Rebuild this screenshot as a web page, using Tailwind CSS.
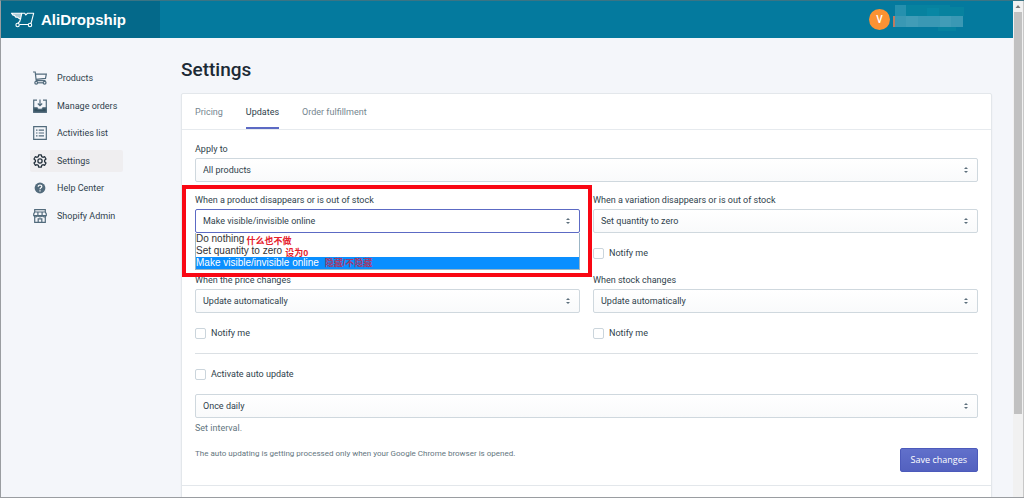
<!DOCTYPE html>
<html lang="en">
<head>
<meta charset="utf-8">
<meta name="viewport" content="width=device-width, initial-scale=1">
<title>AliDropship – Settings</title>
<script src="https://cdn.jsdelivr.net/npm/@tailwindcss/browser@4"></script>
</head>
<body class="h-screen overflow-hidden bg-[#f4f6fa] font-[Roboto,'Noto_Sans_CJK_SC',sans-serif] text-[9px] leading-3 text-[#2f3f4c]">
<svg class="hidden" aria-hidden="true">
  <symbol id="updown" viewBox="0 0 6 8"><path d="M3 1 5 3H1zM3 7 1 5h4z" fill="#5c6f7c"/></symbol>
</svg>
<div class="flex h-full border-y border-l border-[#9a9da1] border-t-[#3b7484]">
  <div class="flex min-w-0 flex-1 flex-col">
    <header class="flex h-[37px] shrink-0 bg-[#047a9e] text-white">
      <a href="#" class="flex w-[159px] items-center gap-[6px] bg-[#04698a] pl-[10px] text-[15px] leading-5 font-bold font-['Liberation_Sans',sans-serif]">
        <svg class="h-4 w-6" viewBox="0 0 24 16" fill="none" stroke="#fff" stroke-width="1.1" stroke-linejoin="round" stroke-linecap="round" aria-hidden="true">
          <path d="M.5 1.2h10.3L9.6 6.6H8.200L6.500 5.200H4.800L3.200 3.200H2z" fill="#fff" fill-opacity=".65"/>
          <path d="M10.800 1.200h3L14.700 3l2-1.800h6l-2.300 9-.8 1.200M9.600 6.600 8.700 9.500l-1.500 1.300M9 12.500h7.800"/>
          <circle cx="6.600" cy="13" r="1.700"/><circle cx="19" cy="13" r="1.700"/>
        </svg>
        AliDropship
      </a>
      <div class="flex flex-1 items-center justify-end gap-[3px] pr-[49px]">
        <span class="flex size-[21px] items-center justify-center rounded-full bg-[#fb9233] text-[10px] font-medium">V</span>
        <svg class="h-[30px] w-[71px]" viewBox="0 0 71 30" role="img" aria-label="Account">
          <path d="M0 11h2v11H0z" fill="#bd7b61"/>
          <path d="M13 0h44v11H13zM57 2h14v9H57zM45 22h18v4H45z" fill="#07829f"/>
          <path d="M2 0h11v11H2z" fill="#2590ae"/>
          <path d="M2 11h68v11H2z" fill="#3a98b4"/>
          <path d="M13 11h12v11H13zM47 11h11v11H47z" fill="#419cb7"/>
          <path d="M34 3h12v8H34z" fill="#0887a4"/>
        </svg>
      </div>
    </header>

    <div class="flex min-h-0 flex-1 overflow-hidden pr-[21px]">
      <nav class="mt-[29px] flex h-40 w-[180px] shrink-0 flex-col justify-between pr-[58px] pl-[29px]">
        <a href="#" class="flex h-[22px] items-center gap-[10px] pl-[3px]">
          <svg class="size-[14px]" viewBox="0 0 14 14" fill="none" stroke="#526b7c" stroke-width="1.2" aria-hidden="true"><path d="M0 1h2.200l1 8.600h9.300M2.500 3.200h10.800l-.8 4.200-9.500.9"/><circle cx="3.200" cy="11.800" r="1.400"/><circle cx="11.600" cy="11.800" r="1.400"/><path d="M4.600 11.800h5.600"/></svg>
          Products</a>
        <a href="#" class="flex h-[22px] items-center gap-[10px] pl-[3px]">
          <svg class="size-[14px]" viewBox="0 0 14 14" fill="none" stroke="#526b7c" stroke-width="1.2" aria-hidden="true"><path d="M4 1.200H.7v12h12.600v-12H10M7 .5v6M4.800 4.500 7 6.700l2.200-2.200"/><path d="M.7 8.800h3.400l1 1.600h3.800l1-1.600h3.400v4.400H.7z" fill="#34505f"/></svg>
          Manage orders</a>
        <a href="#" class="flex h-[22px] items-center gap-[10px] pl-[3px]">
          <svg class="size-[14px]" viewBox="0 0 14 14" fill="none" stroke="#526b7c" stroke-width="1.2" aria-hidden="true"><path d="M.7.7h12.600v12.600H.7zM3 4.200h1.500M5.700 4.200H11M3 7h1.500M5.700 7H11M3 9.800h1.500M5.700 9.800H11"/></svg>
          Activities list</a>
        <a href="#" aria-current="page" class="flex h-[22px] items-center gap-[10px] rounded-xs bg-[#efeef0] pl-[3px]">
          <svg class="size-[14px]" viewBox="0 0 14 14" fill="none" stroke="#25323d" stroke-width="1.3" stroke-linejoin="round" aria-hidden="true"><path d="M5.700.8h2.600l.4 1.800 1.200.7 1.800-.6L13 5l-1.400 1.300v1.400L13 9l-1.300 2.300-1.800-.6-1.200.7-.4 1.800H5.700l-.4-1.800-1.200-.7-1.800.6L1 9l1.400-1.300V6.300L1 5l1.300-2.300 1.800.6 1.200-.7z"/><circle cx="7" cy="7" r="2.100"/></svg>
          Settings</a>
        <a href="#" class="flex h-[22px] items-center gap-[10px] pl-[3px]">
          <svg class="size-[14px]" viewBox="0 0 14 14" fill="none" aria-hidden="true"><circle cx="7" cy="7" r="5.400" fill="#526b7c"/><path d="M5.200 5.700c0-2.300 3.700-2.200 3.600 0C8.700 6.900 7 6.800 7 8.200M7 9.200v1.300" stroke="#fff" stroke-width="1.200"/></svg>
          Help Center</a>
        <a href="#" class="flex h-[22px] items-center gap-[10px] pl-[3px]">
          <svg class="size-[14px]" viewBox="0 0 14 14" fill="none" stroke="#526b7c" stroke-width="1.200" aria-hidden="true"><path d="M1.700.7h10.600v2.300H1.700zM1.700 3 .7 5v1.500h12.600V5l-1-2M4.900 3v3.500M9.100 3v3.500M1.700 6.500v6.800h10.600V6.500M.7 6.500c.8 1.800 3.400 1.800 4.200 0 .8 1.800 3.400 1.800 4.200 0 .8 1.800 3.400 1.800 4.200 0M5.200 13.300V9.800h3.600v3.500"/></svg>
          Shopify Admin</a>
      </nav>

      <main class="min-w-0 flex-1 pt-5">
        <h1 class="text-[19px] leading-6 font-medium text-[#1c2a35]">Settings</h1>
        <section class="mt-[11px] rounded-xs border border-[#e3e7eb] bg-white shadow-xs">
          <div class="flex gap-[23px] border-b border-[#e6eaee] px-[13px] text-[#75868f]" role="tablist">
            <button type="button" role="tab" class="h-[35px]">Pricing</button>
            <button type="button" role="tab" aria-selected="true" class="h-[35px] border-b-2 border-[#5c6ac4] pt-[2px] text-[#2f3f4c]">Updates</button>
            <button type="button" role="tab" class="h-[35px]">Order fulfillment</button>
          </div>

          <form class="p-[13px]">
            <label for="apply" class="block">Apply to</label>
            <div class="relative mt-[3px]">
              <select id="apply" class="block h-6 w-full appearance-none rounded-xs border border-[#cfd8de] bg-linear-to-b from-white to-[#f9fafb] px-[7px]"><option>All products</option></select>
              <svg class="pointer-events-none absolute top-2 right-[9px] h-2 w-[6px]"><use href="#updown"/></svg>
            </div>

            <div class="mt-3 grid grid-cols-2 gap-x-[13px]">
              <div>
                <label for="product" class="block">When a product disappears or is out of stock</label>
                <div class="relative mt-[3px]">
                  <select id="product" class="block h-6 w-full appearance-none rounded-xs border border-[#5c6ac4] bg-white px-[7px]"><option>Make visible/invisible online</option></select>
                  <svg class="pointer-events-none absolute top-2 right-[9px] h-2 w-[6px]"><use href="#updown"/></svg>
                  <ul class="absolute top-6 right-0 left-0 z-10 border border-t-0 border-[#9bb5c5] bg-white font-['Liberation_Sans','Noto_Sans_CJK_SC',sans-serif] text-[10px] text-[#333]" role="listbox" aria-label="When a product disappears or is out of stock">
                    <li role="option" class="flex h-3 gap-[2px]">Do nothing <span class="pt-[2px] text-[9px] leading-3 font-bold text-[#e5202b]">什么也不做</span></li>
                    <li role="option" class="flex h-3 gap-[3px]">Set quantity to zero <span class="pt-[2px] text-[9px] leading-3 font-bold text-[#e5202b]">设为0</span></li>
                    <li role="option" aria-selected="true" class="flex h-3 gap-[6px] bg-[#0a8fff] text-white">Make visible/invisible online <span class="text-[9px] leading-3 font-bold text-[#a33a6c]">隐藏/不隐藏</span></li>
                  </ul>
                  <div class="pointer-events-none absolute -top-6 -right-3 -bottom-11 -left-[13px] z-20 border-4 border-[#f90713]"></div>
                </div>
              </div>
              <div>
                <label for="variation" class="block">When a variation disappears or is out of stock</label>
                <div class="relative mt-[3px]">
                  <select id="variation" class="block h-6 w-full appearance-none rounded-xs border border-[#cfd8de] bg-linear-to-b from-white to-[#f9fafb] px-[7px]"><option>Set quantity to zero</option></select>
                  <svg class="pointer-events-none absolute top-2 right-[9px] h-2 w-[6px]"><use href="#updown"/></svg>
                </div>
                <label class="mt-[14px] flex items-center gap-[5px]"><input type="checkbox" class="size-[11px] appearance-none rounded-xs border border-[#cbd5dc] bg-white">Notify me</label>
              </div>
              <div class="mt-[15px]">
                <label for="price" class="block">When the price changes</label>
                <div class="relative mt-[3px]">
                  <select id="price" class="block h-6 w-full appearance-none rounded-xs border border-[#cfd8de] bg-linear-to-b from-white to-[#f9fafb] px-[7px]"><option>Update automatically</option></select>
                  <svg class="pointer-events-none absolute top-2 right-[9px] h-2 w-[6px]"><use href="#updown"/></svg>
                </div>
                <label class="mt-[14px] flex items-center gap-[5px]"><input type="checkbox" class="size-[11px] appearance-none rounded-xs border border-[#cbd5dc] bg-white">Notify me</label>
              </div>
              <div class="mt-[15px]">
                <label for="stock" class="block">When stock changes</label>
                <div class="relative mt-[3px]">
                  <select id="stock" class="block h-6 w-full appearance-none rounded-xs border border-[#cfd8de] bg-linear-to-b from-white to-[#f9fafb] px-[7px]"><option>Update automatically</option></select>
                  <svg class="pointer-events-none absolute top-2 right-[9px] h-2 w-[6px]"><use href="#updown"/></svg>
                </div>
                <label class="mt-[14px] flex items-center gap-[5px]"><input type="checkbox" class="size-[11px] appearance-none rounded-xs border border-[#cbd5dc] bg-white">Notify me</label>
              </div>
            </div>

            <hr class="mt-[14px] border-[#dbe0e4]">
            <label class="mt-[14px] flex items-center gap-[5px]"><input type="checkbox" class="size-[11px] appearance-none rounded-xs border border-[#cbd5dc] bg-white">Activate auto update</label>
            <div class="relative mt-[14px]">
              <select id="interval" aria-describedby="interval-help" aria-label="Set interval" class="block h-6 w-full appearance-none rounded-xs border border-[#cfd8de] bg-linear-to-b from-white to-[#f9fafb] px-[7px]"><option>Once daily</option></select>
              <svg class="pointer-events-none absolute top-2 right-[9px] h-2 w-[6px]"><use href="#updown"/></svg>
            </div>
            <p id="interval-help" class="mt-1 text-[#647680]">Set interval.</p>
            <div class="mt-[14px] flex items-start justify-between">
              <p class="text-[8px] text-[#647680]">The auto updating is getting processed only when your Google Chrome browser is opened.</p>
              <button type="submit" class="h-6 rounded-xs border border-[#4c5abb] bg-linear-to-b from-[#6170cb] to-[#5361bf] px-[10px] font-['Open_Sans',sans-serif] text-white">Save changes</button>
            </div>
          </form>
          <div class="h-8 border-t border-[#e3e7eb]"></div>
        </section>
      </main>
    </div>
  </div>

  <div class="flex w-[11px] shrink-0 flex-col border-r border-[#c8c8c8] bg-[#f1f1f1]" aria-hidden="true">
    <svg class="h-[11px] w-[10px]" viewBox="0 0 10 11"><path d="M5 4 7.500 7h-5z" fill="#777"/></svg>
    <div class="mx-px h-[81%] bg-[#c1c1c1]"></div>
  </div>
</div>
</body>
</html>
